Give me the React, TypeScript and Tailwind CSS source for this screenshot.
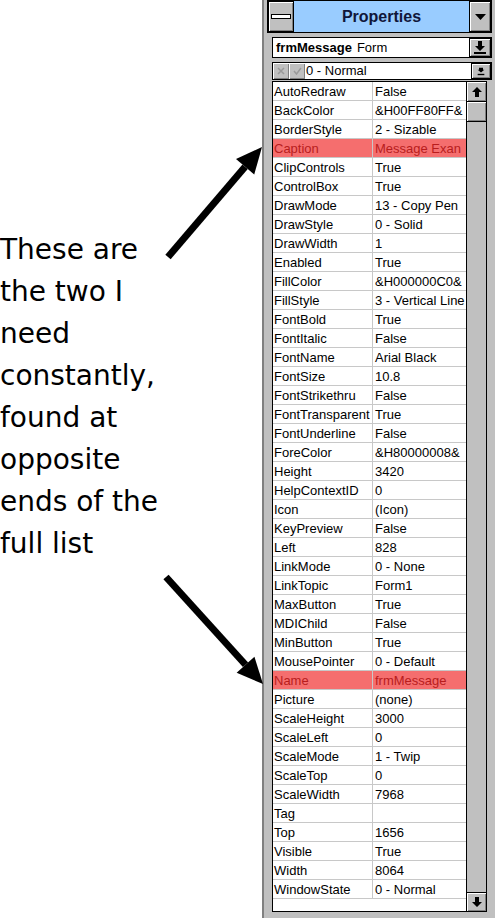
import React from "react";

type Prop = { name: string; value: string; mark?: boolean };

const props: Prop[] = [
  { name: "AutoRedraw", value: "False" },
  { name: "BackColor", value: "&H00FF80FF&" },
  { name: "BorderStyle", value: "2 - Sizable" },
  { name: "Caption", value: "Message Exan", mark: true },
  { name: "ClipControls", value: "True" },
  { name: "ControlBox", value: "True" },
  { name: "DrawMode", value: "13 - Copy Pen" },
  { name: "DrawStyle", value: "0 - Solid" },
  { name: "DrawWidth", value: "1" },
  { name: "Enabled", value: "True" },
  { name: "FillColor", value: "&H000000C0&" },
  { name: "FillStyle", value: "3 - Vertical Line" },
  { name: "FontBold", value: "True" },
  { name: "FontItalic", value: "False" },
  { name: "FontName", value: "Arial Black" },
  { name: "FontSize", value: "10.8" },
  { name: "FontStrikethru", value: "False" },
  { name: "FontTransparent", value: "True" },
  { name: "FontUnderline", value: "False" },
  { name: "ForeColor", value: "&H80000008&" },
  { name: "Height", value: "3420" },
  { name: "HelpContextID", value: "0" },
  { name: "Icon", value: "(Icon)" },
  { name: "KeyPreview", value: "False" },
  { name: "Left", value: "828" },
  { name: "LinkMode", value: "0 - None" },
  { name: "LinkTopic", value: "Form1" },
  { name: "MaxButton", value: "True" },
  { name: "MDIChild", value: "False" },
  { name: "MinButton", value: "True" },
  { name: "MousePointer", value: "0 - Default" },
  { name: "Name", value: "frmMessage", mark: true },
  { name: "Picture", value: "(none)" },
  { name: "ScaleHeight", value: "3000" },
  { name: "ScaleLeft", value: "0" },
  { name: "ScaleMode", value: "1 - Twip" },
  { name: "ScaleTop", value: "0" },
  { name: "ScaleWidth", value: "7968" },
  { name: "Tag", value: "" },
  { name: "Top", value: "1656" },
  { name: "Visible", value: "True" },
  { name: "Width", value: "8064" },
  { name: "WindowState", value: "0 - Normal" },
];

const note = ["These are", "the two I", "need", "constantly,", "found at", "opposite", "ends of the", "full list"];

// raised 3d button like win 3.1
const raised = "bg-[#c0c0c0] border border-black shadow-[inset_1px_1px_0_#ffffff,inset_-1px_-1px_0_#808080]";

const DownBar = ({ small }: { small?: boolean }) => (
  <svg width={small ? 8 : 12} height={small ? 9 : 13} viewBox="0 0 12 13">
    {small ? (
      <>
        <path d="M3 1h6v3h2l-5 4-5-4h2z" fill="#000" />
        <rect x="1" y="10" width="10" height="2" fill="#000" />
      </>
    ) : (
      <>
        <path d="M4 0h4v5h3l-5 5-5-5h3z" fill="#000" />
        <rect x="0" y="11" width="12" height="2" fill="#000" />
      </>
    )}
  </svg>
);

const Arrow = ({ x1, y1, x2, y2 }: { x1: number; y1: number; x2: number; y2: number }) => {
  const ang = Math.atan2(y2 - y1, x2 - x1);
  const len = 26;
  const half = 12;
  const bx = x2 - Math.cos(ang) * len;
  const by = y2 - Math.sin(ang) * len;
  const px = -Math.sin(ang) * half;
  const py = Math.cos(ang) * half;
  return (
    <g>
      <line x1={x1} y1={y1} x2={bx} y2={by} stroke="#000" strokeWidth="7" />
      <polygon points={`${x2},${y2} ${bx + px},${by + py} ${bx - px},${by - py}`} fill="#000" />
    </g>
  );
};

export default function App() {
  return (
    <div className="relative flex w-[495px] h-[918px] bg-white overflow-hidden">
      {/* note text */}
      <div className="w-[262px] shrink-0 pt-[229px] font-['Comic_Sans_MS','DejaVu_Sans',sans-serif] text-[28px] leading-[42px] text-black">
        {note.map((l) => (
          <div key={l} className="whitespace-nowrap">{l}</div>
        ))}
      </div>

      {/* properties window */}
      <div className="flex flex-col w-[233px] h-full shrink-0 bg-[#c0c0c0] border-l-2 border-[#808080] pl-[3px] font-['Liberation_Sans',Arial,sans-serif] text-[13px] text-black">
        {/* title bar */}
        <div className="flex h-[33px] mr-[3px] border border-black">
          <div className={`w-[26px] flex items-center justify-center ${raised}`}>
            <div className="w-[20px] h-[5px] bg-white border border-black" />
          </div>
          <div className="flex-1 bg-[#99ccff] flex items-center justify-center text-[16px] font-bold text-[#10163a]">
            Properties
          </div>
          <div className={`w-[22px] flex items-center justify-center ${raised}`}>
            <svg width="11" height="6" viewBox="0 0 11 6">
              <path d="M0 0h11L5.5 6z" fill="#000" />
            </svg>
          </div>
        </div>

        <div className="flex flex-col flex-1 pl-[5px] pr-[3px] pb-[6px]">
          {/* object combo */}
          <div className="flex h-[21px] mt-[4px] bg-white border border-black">
            <div className="flex-1 flex items-center pl-[3px] gap-[5px]">
              <span className="font-bold">frmMessage</span>
              <span>Form</span>
            </div>
            <div className={`w-[22px] flex items-center justify-center ${raised}`}>
              <DownBar />
            </div>
          </div>

          {/* edit row */}
          <div className="flex h-[18px] mt-[4px] bg-white border border-black">
            <div className={`w-[16px] flex items-center justify-center ${raised} border-0`}>
              <svg width="8" height="8" viewBox="0 0 8 8">
                <path d="M1 1l6 6M7 1l-6 6" stroke="#9a9a9a" strokeWidth="1.5" />
              </svg>
            </div>
            <div className={`w-[16px] flex items-center justify-center ${raised} border-0`}>
              <svg width="9" height="8" viewBox="0 0 9 8">
                <path d="M1 4l2.5 3L8 1" stroke="#9a9a9a" strokeWidth="1.5" fill="none" />
              </svg>
            </div>
            <div className="flex-1 flex items-center pl-[1px]">0 - Normal</div>
            <div className={`w-[20px] flex items-center justify-center ${raised}`}>
              <DownBar small />
            </div>
          </div>

          {/* grid */}
          <div className="flex flex-1 mt-[1px] mr-[5px] bg-white border border-black">
            <div className="flex-1 flex flex-col overflow-hidden">
              {props.map((p) => (
                <div
                  key={p.name}
                  className={`flex h-[19px] shrink-0 border-b border-[#c8c8c8] ${p.mark ? "bg-[#f56e6e] text-[#b81d1d]" : ""}`}
                >
                  <div className="w-[100px] shrink-0 pl-[1px] leading-[19px] border-r border-[#c8c8c8] whitespace-nowrap overflow-hidden">
                    {p.name}
                  </div>
                  <div className="flex-1 pl-[2px] leading-[19px] whitespace-nowrap overflow-hidden">{p.value}</div>
                </div>
              ))}
            </div>
            {/* scrollbar */}
            <div className="w-[20px] flex flex-col bg-[#c0c0c0] border-l border-black">
              <div className={`h-[20px] flex items-center justify-center ${raised} border-0 border-b`}>
                <svg width="10" height="10" viewBox="0 0 10 10">
                  <path d="M5 0l5 5H7v5H3V5H0z" fill="#000" />
                </svg>
              </div>
              <div className={`h-[20px] ${raised} border-0 border-b`} />
              <div className="flex-1" />
              <div className={`h-[19px] flex items-center justify-center ${raised} border-0 border-t`}>
                <svg width="10" height="10" viewBox="0 0 10 10">
                  <path d="M3 0h4v5h3l-5 5-5-5h3z" fill="#000" />
                </svg>
              </div>
            </div>
          </div>
        </div>
      </div>

      {/* pointer arrows */}
      <svg className="absolute left-0 top-0 pointer-events-none" width="495" height="918">
        <Arrow x1={168} y1={257} x2={262} y2={147} />
        <Arrow x1={166} y1={577} x2={263} y2={684} />
      </svg>
    </div>
  );
}
